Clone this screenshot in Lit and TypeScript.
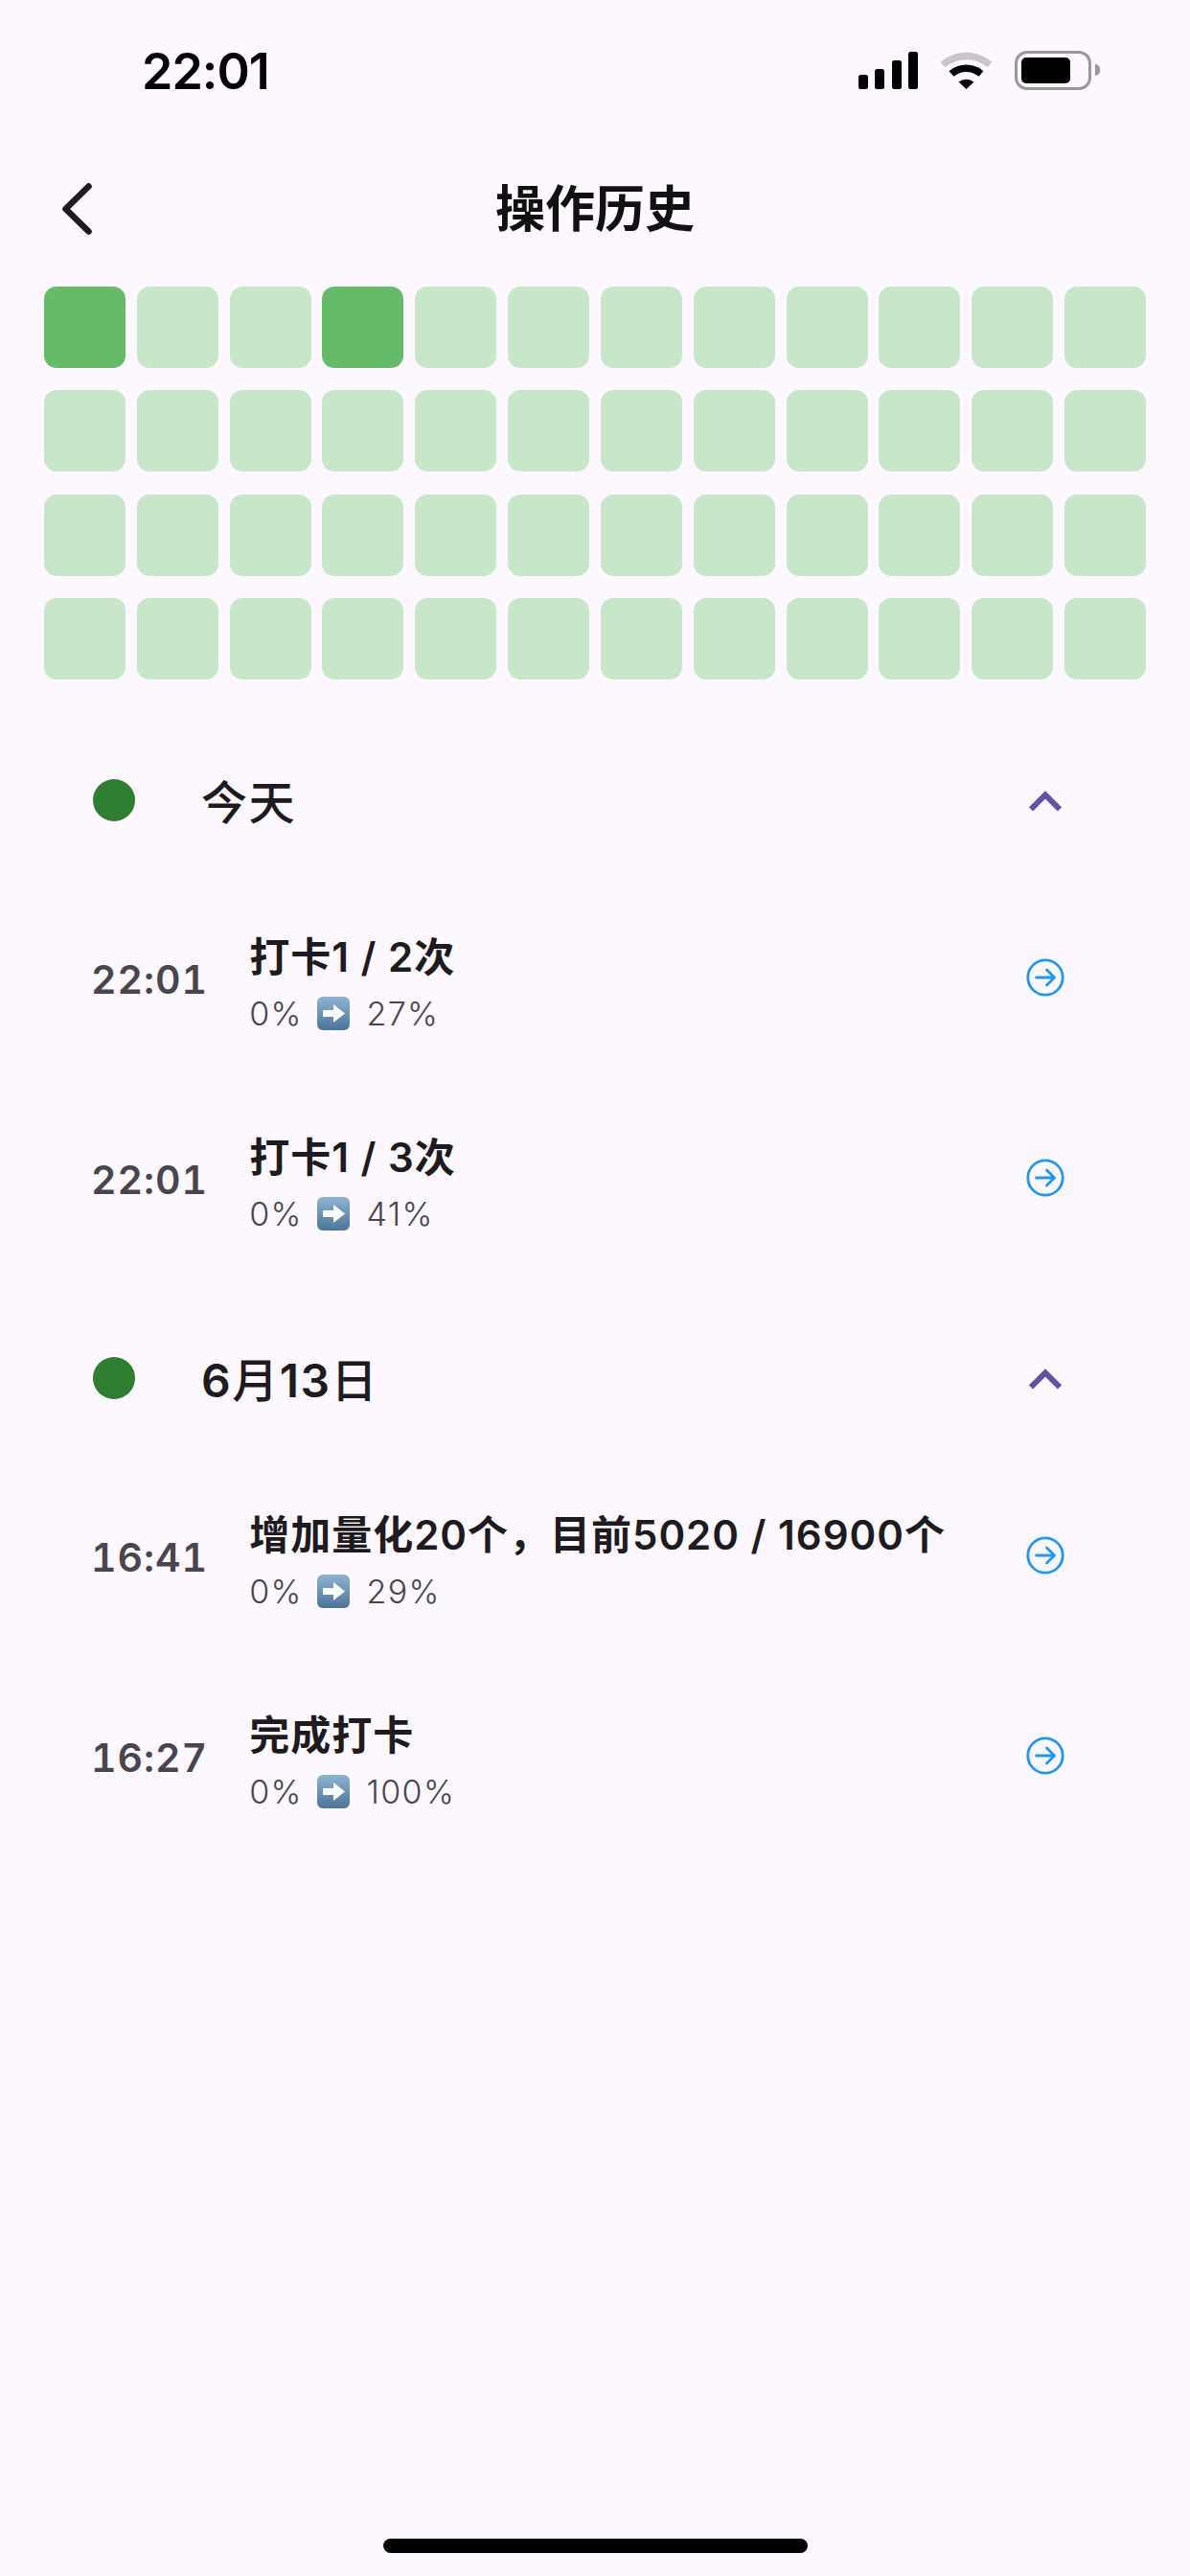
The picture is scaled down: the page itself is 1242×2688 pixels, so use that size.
import {LitElement, css, html, svg} from 'lit'
import {customElement} from 'lit/decorators.js'

type Entry = {time: string, title: string, to: string}
type Section = {label: string, entries: Entry[]}

const sections: Section[] = [
    {
        label: "今天",
        entries: [
            {time: "22:01", title: "打卡1 / 2次", to: "27%"},
            {time: "22:01", title: "打卡1 / 3次", to: "41%"},
        ],
    },
    {
        label: "6月13日",
        entries: [
            {time: "16:41", title: "增加量化20个，目前5020 / 16900个", to: "29%"},
            {time: "16:27", title: "完成打卡", to: "100%"},
        ],
    },
]

// 12 x 4 heat map, only these two cells are done
const done = [0, 3]

const signal = svg`
    <rect x="0" y="24" width="10" height="15" rx="2.5"/>
    <rect x="17" y="18" width="10" height="21" rx="2.5"/>
    <rect x="35" y="9" width="10" height="30" rx="2.5"/>
    <rect x="52" y="0" width="10" height="39" rx="2.5"/>
`

const wifi = svg`
    <path d="M3 15.5 A38 38 0 0 1 52 15.5" fill="none" stroke="#c9c5ca" stroke-width="7.5"/>
    <path d="M12 25 A24 24 0 0 1 43 25" fill="none" stroke="#000" stroke-width="7.5"/>
    <path d="M19.5 33.5 A13 13 0 0 1 35.5 33.5 L27.5 41 Z" fill="#000"/>
`

@customElement('app-root')
export class App_Root extends LitElement
{
    renderEmoji()
    {
        return html`
            <svg class="emoji" viewBox="0 0 34 35">
                <defs>
                    <linearGradient id="emoji-bg" x1="0" y1="0" x2="0" y2="1">
                        <stop offset="0" stop-color="#8fb4d2"/>
                        <stop offset="1" stop-color="#4c7497"/>
                    </linearGradient>
                </defs>
                <rect width="34" height="35" rx="6" fill="url(#emoji-bg)"/>
                <path d="M6 14 H17 V8 L29 17.5 L17 27 V21 H6 Z" fill="#fff"/>
            </svg>
        `
    }

    renderEntry(entry: Entry)
    {
        return html`
            <div class="entry">
                <div class="time">${entry.time}</div>
                <div class="body">
                    <div class="title">${entry.title}</div>
                    <div class="change">
                        <span>0%</span>
                        ${this.renderEmoji()}
                        <span class="to">${entry.to}</span>
                    </div>
                </div>
                <svg class="go" viewBox="0 0 40 40" fill="none" stroke="#2196f3" stroke-width="2.8" stroke-linecap="round" stroke-linejoin="round">
                    <circle cx="20" cy="20" r="18.2"/>
                    <path d="M10.5 20 H29 M21.5 12 L29.5 20 L21.5 28"/>
                </svg>
            </div>
        `
    }

    // digits sit heavier than the CJK in the section labels
    renderLabel(label: string)
    {
        return label.split(/(\d+)/).map(part =>
            /\d/.test(part) ? html`<span class="num">${part}</span>` : part
        )
    }

    render()
    {
        return html`
            <div class="status">
                <div class="clock">22:01</div>
                <div class="status-icons">
                    <svg class="signal" viewBox="0 0 62 39">${signal}</svg>
                    <svg class="wifi" viewBox="0 0 55 42">${wifi}</svg>
                    <div class="battery"><div class="level"></div></div>
                    <div class="nub"></div>
                </div>
            </div>

            <div class="nav">
                <svg class="back" viewBox="0 0 31 54" fill="none" stroke="#1d1b20" stroke-width="6.6" stroke-linecap="round" stroke-linejoin="round">
                    <path d="M27.5 3.5 L3.5 27 L27.5 50.5"/>
                </svg>
                <div class="heading">操作历史</div>
            </div>

            <div class="grid">
                ${Array.from({length: 48}, (_, i) => html`
                    <div class="cell ${done.includes(i) ? "on" : ""}"></div>
                `)}
            </div>

            <div class="list">
                ${sections.map(section => html`
                    <section>
                        <div class="head">
                            <div class="dot"></div>
                            <div class="label">${this.renderLabel(section.label)}</div>
                            <svg class="fold" viewBox="0 0 34 22" fill="none" stroke="#6750a4" stroke-width="6">
                                <path d="M2 19.5 L17 4.5 L32 19.5"/>
                            </svg>
                        </div>
                        ${section.entries.map(entry => this.renderEntry(entry))}
                    </section>
                `)}
            </div>

            <div class="home"><div class="bar"></div></div>
        `
    }

    static styles = css`
        :host
        {
            display: flex;
            flex-direction: column;
            min-height: 2688px;
            background: #fdf8ff;
            color: #1d1b20;
            font-family: Inter, "Noto Sans CJK SC", sans-serif;
        }

        .status
        {
            box-sizing: border-box;
            height: 110px;
            padding: 43px 94px 0 148px;
            display: flex;
            justify-content: space-between;
            align-items: flex-start;
        }

        .clock
        {
            font-size: 52px;
            line-height: 63px;
            font-weight: 600;
            letter-spacing: -1px;
            color: #000;
        }

        .status-icons
        {
            display: flex;
            align-items: center;
            margin-top: 9px;
        }

        .signal
        {
            width: 62px;
            height: 39px;
            margin-top: 1px;
            fill: #000;
        }

        .wifi
        {
            width: 55px;
            height: 42px;
            margin-left: 23px;
        }

        .battery
        {
            box-sizing: border-box;
            width: 80px;
            height: 41px;
            margin-left: 23px;
            padding: 4px;
            border: 3px solid #9a979b;
            border-radius: 13px;
        }

        .level
        {
            width: 51px;
            height: 100%;
            background: #000;
            border-radius: 5px;
        }

        .nub
        {
            width: 5px;
            height: 12px;
            margin-left: 4px;
            background: #9a979b;
            border-radius: 0 6px 6px 0;
        }

        .nav
        {
            position: relative;
            height: 189px;
            display: flex;
            justify-content: center;
        }

        .heading
        {
            margin-top: 77px;
            font-size: 52px;
            line-height: 64px;
            font-weight: 600;
            color: #111;
        }

        .back
        {
            position: absolute;
            left: 65px;
            top: 81px;
            width: 31px;
            height: 54px;
        }

        .grid
        {
            display: grid;
            grid-template-columns: repeat(12, 85px);
            grid-auto-rows: 85px;
            justify-content: space-between;
            row-gap: 23.33px;
            padding: 0 46px;
        }

        .cell
        {
            border-radius: 13px;
            background: #c8e6c9;
        }

        .cell.on
        {
            background: #66bb6a;
        }

        .list
        {
            margin-top: 71.5px;
            padding: 0 131px 0 95px;
        }

        section
        {
            margin-bottom: 51px;
        }

        .head
        {
            height: 110px;
            margin-bottom: 24px;
            display: flex;
            align-items: center;
        }

        .dot
        {
            width: 44px;
            height: 44px;
            margin-left: 2px;
            border-radius: 50%;
            background: #2e7d32;
        }

        .label
        {
            flex: 1;
            margin: 6px 0 0 69px;
            font-size: 48px;
            line-height: 60px;
            font-weight: 500;
            letter-spacing: 1.5px;
        }

        .num
        {
            font-weight: 600;
        }

        .fold
        {
            width: 34px;
            height: 22px;
            margin: 2px 3px 0 0;
        }

        .entry
        {
            height: 209px;
            display: flex;
            align-items: center;
        }

        .time
        {
            margin: 7px 43px 0 0;
            font-size: 41px;
            font-weight: 600;
            letter-spacing: 1px;
            font-variant-numeric: tabular-nums;
            color: #49454f;
        }

        .body
        {
            flex: 1;
            padding-top: 11px;
        }

        .title
        {
            font-size: 42px;
            line-height: 56px;
            font-weight: 600;
            letter-spacing: 1px;
            white-space: nowrap;
        }

        .change
        {
            display: flex;
            align-items: center;
            margin-top: 11px;
            font-size: 34px;
            line-height: 40px;
            font-weight: 300;
            letter-spacing: 1.3px;
            color: #49454f;
        }

        .emoji
        {
            width: 34px;
            height: 35px;
            margin-left: 15px;
        }

        .to
        {
            margin-left: 18px;
        }

        .go
        {
            width: 40px;
            height: 40px;
            flex: none;
            margin-top: 2px;
        }

        .home
        {
            margin-top: auto;
            padding-bottom: 24px;
            display: flex;
            justify-content: center;
        }

        .bar
        {
            width: 443px;
            height: 15px;
            border-radius: 8px;
            background: #000;
        }
    `
}

declare global
{
    interface HTMLElementTagNameMap
    {
        'app-root': App_Root
    }
}
